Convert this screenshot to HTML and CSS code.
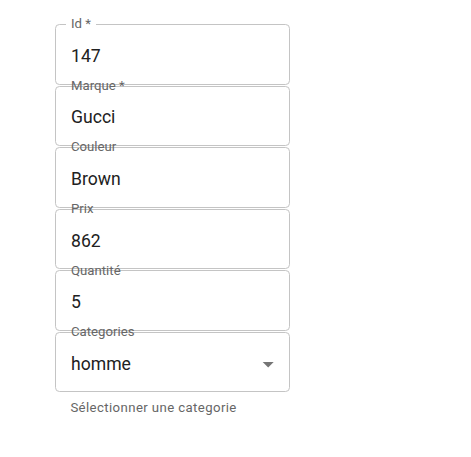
FILE: index.html
```html
<!DOCTYPE html>
<html lang="fr">
<head>
<meta charset="utf-8">
<title>Produit</title>
<link rel="stylesheet" href="styles.css">
</head>
<body>
<form class="form">
  <div class="field">
    <span class="label notch">Id *</span>
    <div class="row"><span class="value">147</span></div>
  </div>
  <div class="field">
    <span class="label">Marque *</span>
    <div class="row"><span class="value">Gucci</span></div>
  </div>
  <div class="field">
    <span class="label">Couleur</span>
    <div class="row"><span class="value">Brown</span></div>
  </div>
  <div class="field">
    <span class="label">Prix</span>
    <div class="row"><span class="value">862</span></div>
  </div>
  <div class="field">
    <span class="label">Quantité</span>
    <div class="row"><span class="value">5</span></div>
  </div>
  <div class="field select">
    <span class="label">Categories</span>
    <div class="row">
      <span class="value">homme</span>
      <svg class="arrow" viewBox="0 0 24 24" aria-hidden="true"><path d="M7 10l5 5 5-5z"/></svg>
    </div>
  </div>
  <p class="helper">Sélectionner une categorie</p>
</form>
</body>
</html>
```
FILE: styles.css
```css
html, body {
  margin: 0;
  padding: 0;
  background: #fff;
}
body {
  font-family: Roboto, "Liberation Sans", sans-serif;
}
.form {
  display: flex;
  flex-direction: column;
  width: 235px;
  padding: 24px 0 0 55px;
  margin: 0;
}
.field {
  position: relative;
  box-sizing: border-box;
  height: 60.5px;
  margin-bottom: 1.1px;
  border: 1px solid #c4c4c4;
  border-radius: 4.4px;
  padding: 18.8px 7.2px 0 15px;
}
.label {
  position: absolute;
  top: -10.8px;
  left: 9.5px;
  padding: 0 5.5px;
  font-size: 13.2px;
  line-height: 19px;
  color: #666;
  white-space: nowrap;
}
.label.notch {
  background: #fff;
}
.row {
  display: flex;
  align-items: center;
  justify-content: space-between;
  height: 25.3px;
}
.value {
  font-size: 17.6px;
  line-height: 25.3px;
  color: #212121;
}
.arrow {
  width: 26.4px;
  height: 26.4px;
  fill: #757575;
  flex: none;
}
.helper {
  margin: 3px 0 0 15.4px;
  font-size: 13.2px;
  line-height: 21.9px;
  color: #666;
  letter-spacing: 0.03em;
}
```
